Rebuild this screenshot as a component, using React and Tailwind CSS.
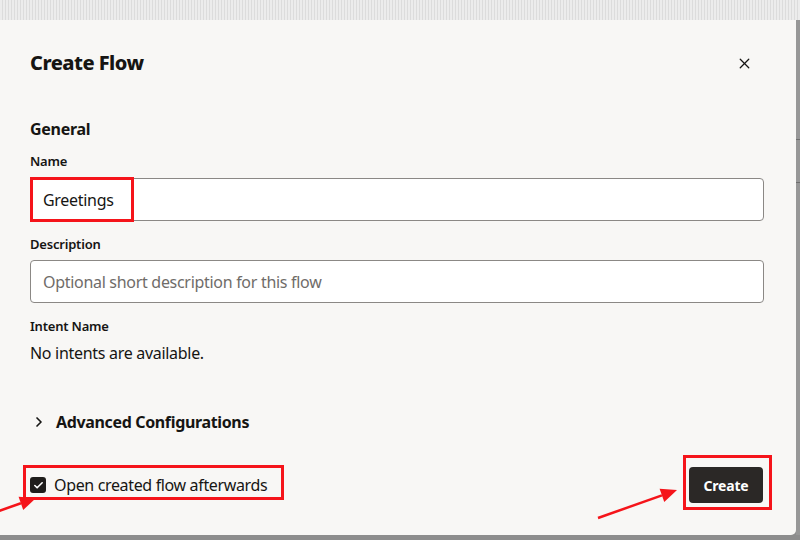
import { X, ChevronRight, Check } from 'lucide-react'

const FONT = { fontFamily: '"Noto Sans", "Open Sans", sans-serif' }

function Field({ label, children, className }) {
  return (
    <div className={className}>
      <p className="text-[13px] leading-[18px] font-semibold tracking-[-0.2px] text-[#161513]">{label}</p>
      {children}
    </div>
  )
}

function Arrow({ x1, y1, x2, y2 }) {
  const a = Math.atan2(y2 - y1, x2 - x1)
  const len = 16
  const w = 7
  const bx = x2 - len * Math.cos(a)
  const by = y2 - len * Math.sin(a)
  const px = -Math.sin(a) * w
  const py = Math.cos(a) * w
  return (
    <g>
      <line x1={x1} y1={y1} x2={bx} y2={by} stroke="#f5141a" strokeWidth="2.5" />
      <polygon points={`${x2},${y2} ${bx + px},${by + py} ${bx - px},${by - py}`} fill="#f5141a" />
    </g>
  )
}

export default function App() {
  return (
    <div className="relative w-[800px] h-[540px] overflow-hidden bg-[#8d8d8d] text-[#161513]" style={FONT}>
      <div className="h-[20px] bg-[#e4e4e4] bg-[repeating-linear-gradient(90deg,#ececec_0px,#ececec_2px,#dcdcdc_2px,#dcdcdc_3px)]" />
      <div className="flex">
        <div className="w-[796px] h-[515px] bg-[#f8f7f5] rounded-br-[5px] px-[30px] pr-[32px] pt-[29px] flex flex-col">
          <div className="flex items-center justify-between h-[28px]">
            <h2 className="text-[20px] font-extrabold tracking-[-0.5px] leading-[28px]">Create Flow</h2>
            <X size={17} strokeWidth={1.8} className="mr-[11px] text-[#161513]" />
          </div>

          <h3 className="mt-[40px] text-[16px] leading-[24px] font-bold tracking-[-0.3px]">General</h3>

          <Field label="Name" className="mt-[11px]">
            <div className="mt-[8px] h-[43px] rounded-[4px] border border-[#8b8885] bg-white flex items-center px-[12px] text-[16px] tracking-[-0.3px]">
              Greetings
            </div>
          </Field>

          <Field label="Description" className="mt-[14px]">
            <div className="mt-[7px] h-[43px] rounded-[4px] border border-[#8b8885] bg-white flex items-center px-[12px] text-[16px] tracking-[-0.3px] text-[#6f6c69]">
              Optional short description for this flow
            </div>
          </Field>

          <Field label="Intent Name" className="mt-[14px]">
            <p className="mt-[6px] text-[16px] leading-[24px] tracking-[-0.3px]">No intents are available.</p>
          </Field>

          <div className="mt-[45px] flex items-center h-[24px]">
            <ChevronRight size={16} strokeWidth={2.5} className="ml-[1px] mr-[9px]" />
            <span className="text-[16px] font-bold tracking-[-0.35px]">Advanced Configurations</span>
          </div>

          <div className="mt-[33px] flex items-center justify-between">
            <label className="flex items-center gap-[8px] text-[16px] tracking-[-0.35px]">
              <span className="w-[16px] h-[16px] rounded-[3px] bg-[#1f1d1b] flex items-center justify-center">
                <Check size={11} strokeWidth={3.5} className="text-white" />
              </span>
              Open created flow afterwards
            </label>
            <button className="h-[36px] w-[74px] mr-[1px] rounded-[4px] bg-[#2b2826] text-white text-[14px] font-bold tracking-[-0.2px]">
              Create
            </button>
          </div>
        </div>
        <div className="flex-1 h-[515px] bg-[#979797] flex flex-col">
          <div className="h-[120px] border-b border-[#6e6e6e]" />
          <div className="h-[43px] border-b border-[#6e6e6e]" />
        </div>
      </div>

      <div className="absolute left-[30px] top-[177px] w-[104px] h-[45px] border-[3px] border-[#f5141a]" />
      <div className="absolute left-[23px] top-[465px] w-[261px] h-[35px] border-[3px] border-[#f5141a]" />
      <div className="absolute left-[683px] top-[455px] w-[89px] h-[55px] border-[3px] border-[#f5141a]" />

      <svg className="absolute inset-0 pointer-events-none" width="800" height="540">
        <Arrow x1={-4} y1={512} x2={36} y2={498} />
        <Arrow x1={598} y1={518} x2={677} y2={490} />
      </svg>
    </div>
  )
}
